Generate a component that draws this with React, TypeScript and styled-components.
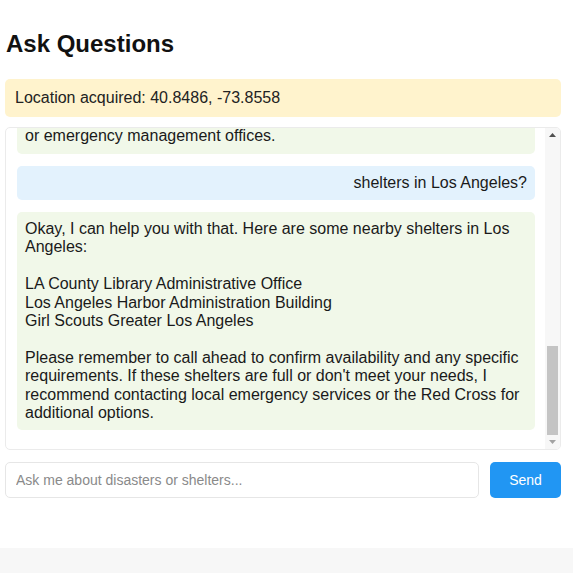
import { useLayoutEffect, useRef, useState } from "react";
import styled, { createGlobalStyle } from "styled-components";

type Message = { from: "bot" | "user"; text: string };

const messages: Message[] = [
    {
        from: "bot",
        text: "Hello! I can help you find information about natural disasters,\nalerts in your area, and nearby emergency shelters. What would\nyou like to know?",
    },
    { from: "user", text: "Are there any active alerts near me?" },
    {
        from: "bot",
        text: "Based on your location, there are currently no severe weather\nwarnings in effect. However, conditions can change quickly, so\nplease keep an eye on local news and official alerts.\n\nYou may want to prepare an emergency kit with water, food,\nmedications, a flashlight, extra batteries, a first aid kit,\nand copies of important documents.",
    },
    { from: "user", text: "What should I do if there is a flood?" },
    {
        from: "bot",
        text: "If a flood warning is issued for your area:\n\nMove to higher ground right away.\nAvoid walking or driving through flood waters.\nTurn off utilities at the main switches if told to do so.\nDisconnect electrical appliances.\nDo not touch electrical equipment if you are wet.\n\nJust six inches of moving water can knock you down, and one\nfoot of moving water can sweep a vehicle away. Stay tuned to\nlocal radio or TV for updates and evacuation orders.",
    },
    { from: "user", text: "Where is the nearest shelter?" },
    {
        from: "bot",
        text: "I couldn't find any open shelters close to your current location\nright now. Shelters are usually opened when an emergency is\ndeclared.\n\nFor the most up-to-date information, please check with your\nlocal Red Cross chapter, city officials, 311 services,\nor emergency management offices.",
    },
    { from: "user", text: "shelters in Los Angeles?" },
    {
        from: "bot",
        text: "Okay, I can help you with that. Here are some nearby shelters in Los\nAngeles:\n\nLA County Library Administrative Office\nLos Angeles Harbor Administration Building\nGirl Scouts Greater Los Angeles\n\nPlease remember to call ahead to confirm availability and any specific\nrequirements. If these shelters are full or don't meet your needs, I\nrecommend contacting local emergency services or the Red Cross for\nadditional options.",
    },
];

export default function App() {
    const chatRef = useRef<HTMLDivElement>(null);
    const trackRef = useRef<HTMLDivElement>(null);
    const [thumb, setThumb] = useState({ top: 0, height: 0 });

    useLayoutEffect(() => {
        const el = chatRef.current;
        const track = trackRef.current;
        if (!el || !track) return;
        el.scrollTop = el.scrollHeight;
        const update = () => {
            const trackH = track.clientHeight;
            const h = Math.max(20, (trackH * el.clientHeight) / el.scrollHeight);
            const max = el.scrollHeight - el.clientHeight;
            const top = max > 0 ? ((trackH - h) * el.scrollTop) / max : 0;
            setThumb({ top, height: h });
        };
        update();
        el.addEventListener("scroll", update);
        return () => el.removeEventListener("scroll", update);
    }, []);

    return (
        <>
            <GlobalStyle />
            <Card>
                <Title>Ask Questions</Title>
                <LocationBanner>Location acquired: 40.8486, -73.8558</LocationBanner>

                <ChatFrame>
                    <ChatBox ref={chatRef}>
                        {messages.map((m, i) => (
                            <Bubble key={i} $from={m.from}>
                                {m.text}
                            </Bubble>
                        ))}
                    </ChatBox>
                    <ScrollRail>
                        <ScrollArrow>
                            <svg width="7" height="4" viewBox="0 0 7 4">
                                <path d="M0 4h7L3.5 0z" fill="#505050" />
                            </svg>
                        </ScrollArrow>
                        <ScrollTrack ref={trackRef}>
                            <ScrollThumb style={{ marginTop: thumb.top, height: thumb.height }} />
                        </ScrollTrack>
                        <ScrollArrow>
                            <svg width="7" height="4" viewBox="0 0 7 4">
                                <path d="M0 0h7L3.5 4z" fill="#a3a3a3" />
                            </svg>
                        </ScrollArrow>
                    </ScrollRail>
                </ChatFrame>

                <InputRow>
                    <QuestionInput placeholder="Ask me about disasters or shelters..." />
                    <SendButton>Send</SendButton>
                </InputRow>
            </Card>
        </>
    );
}

const GlobalStyle = createGlobalStyle`
    html, body {
        margin: 0;
        padding: 0;
        background: #f7f7f7;
        font-family: "Liberation Sans", Arial, sans-serif;
    }
`;

const Card = styled.div`
    background: #ffffff;
    height: 548px;
    box-sizing: border-box;
    padding: 30px 12px 0 5px;
    box-shadow: 0 2px 8px rgba(0, 0, 0, 0.08);
`;

const Title = styled.h2`
    margin: 0 0 0 1px;
    font-size: 24px;
    font-weight: bold;
    color: #111;
`;

const LocationBanner = styled.div`
    margin-top: 21px;
    padding: 10px;
    background: #fff3cd;
    border-radius: 5px;
    font-size: 16px;
    color: #222;
`;

const ChatFrame = styled.div`
    margin-top: 10px;
    height: 323px;
    box-sizing: border-box;
    border: 1px solid #ebebeb;
    border-radius: 5px;
    display: flex;
    overflow: hidden;
`;

const ChatBox = styled.div`
    flex: 1;
    overflow-y: auto;
    scrollbar-width: none;
    padding: 11px 10px 19px 11px;
    display: flex;
    flex-direction: column;
    gap: 12px;

    &::-webkit-scrollbar {
        display: none;
    }
`;

const ScrollRail = styled.div`
    width: 15px;
    flex-shrink: 0;
    display: flex;
    flex-direction: column;
    background: #f7f7f7;
`;

const ScrollArrow = styled.div`
    height: 14px;
    display: flex;
    align-items: center;
    justify-content: center;
`;

const ScrollTrack = styled.div`
    flex: 1;
    display: flex;
    flex-direction: column;
    padding: 0 2px;
`;

const ScrollThumb = styled.div`
    background: #c4c4c4;
`;

const Bubble = styled.div<{ $from: "bot" | "user" }>`
    flex-shrink: 0;
    padding: 8px;
    border-radius: 5px;
    font-size: 16px;
    line-height: 18.4px;
    color: #1a1a1a;
    white-space: pre-wrap;
    background: ${(p) => (p.$from === "user" ? "#e3f2fd" : "#f1f8e9")};
    text-align: ${(p) => (p.$from === "user" ? "right" : "left")};
`;

const InputRow = styled.div`
    margin-top: 12px;
    display: flex;
    gap: 11px;
`;

const QuestionInput = styled.input`
    flex: 1;
    height: 36px;
    box-sizing: border-box;
    padding: 0 10px;
    border: 1px solid #e6e6e6;
    border-radius: 5px;
    font-family: "Liberation Sans", Arial, sans-serif;
    font-size: 14px;
    outline: none;

    &::placeholder {
        color: #8a8a8a;
    }
`;

const SendButton = styled.button`
    width: 71px;
    height: 36px;
    border: none;
    border-radius: 5px;
    background: #2196f3;
    color: #fff;
    font-family: "Liberation Sans", Arial, sans-serif;
    font-size: 14px;
    cursor: pointer;
`;
